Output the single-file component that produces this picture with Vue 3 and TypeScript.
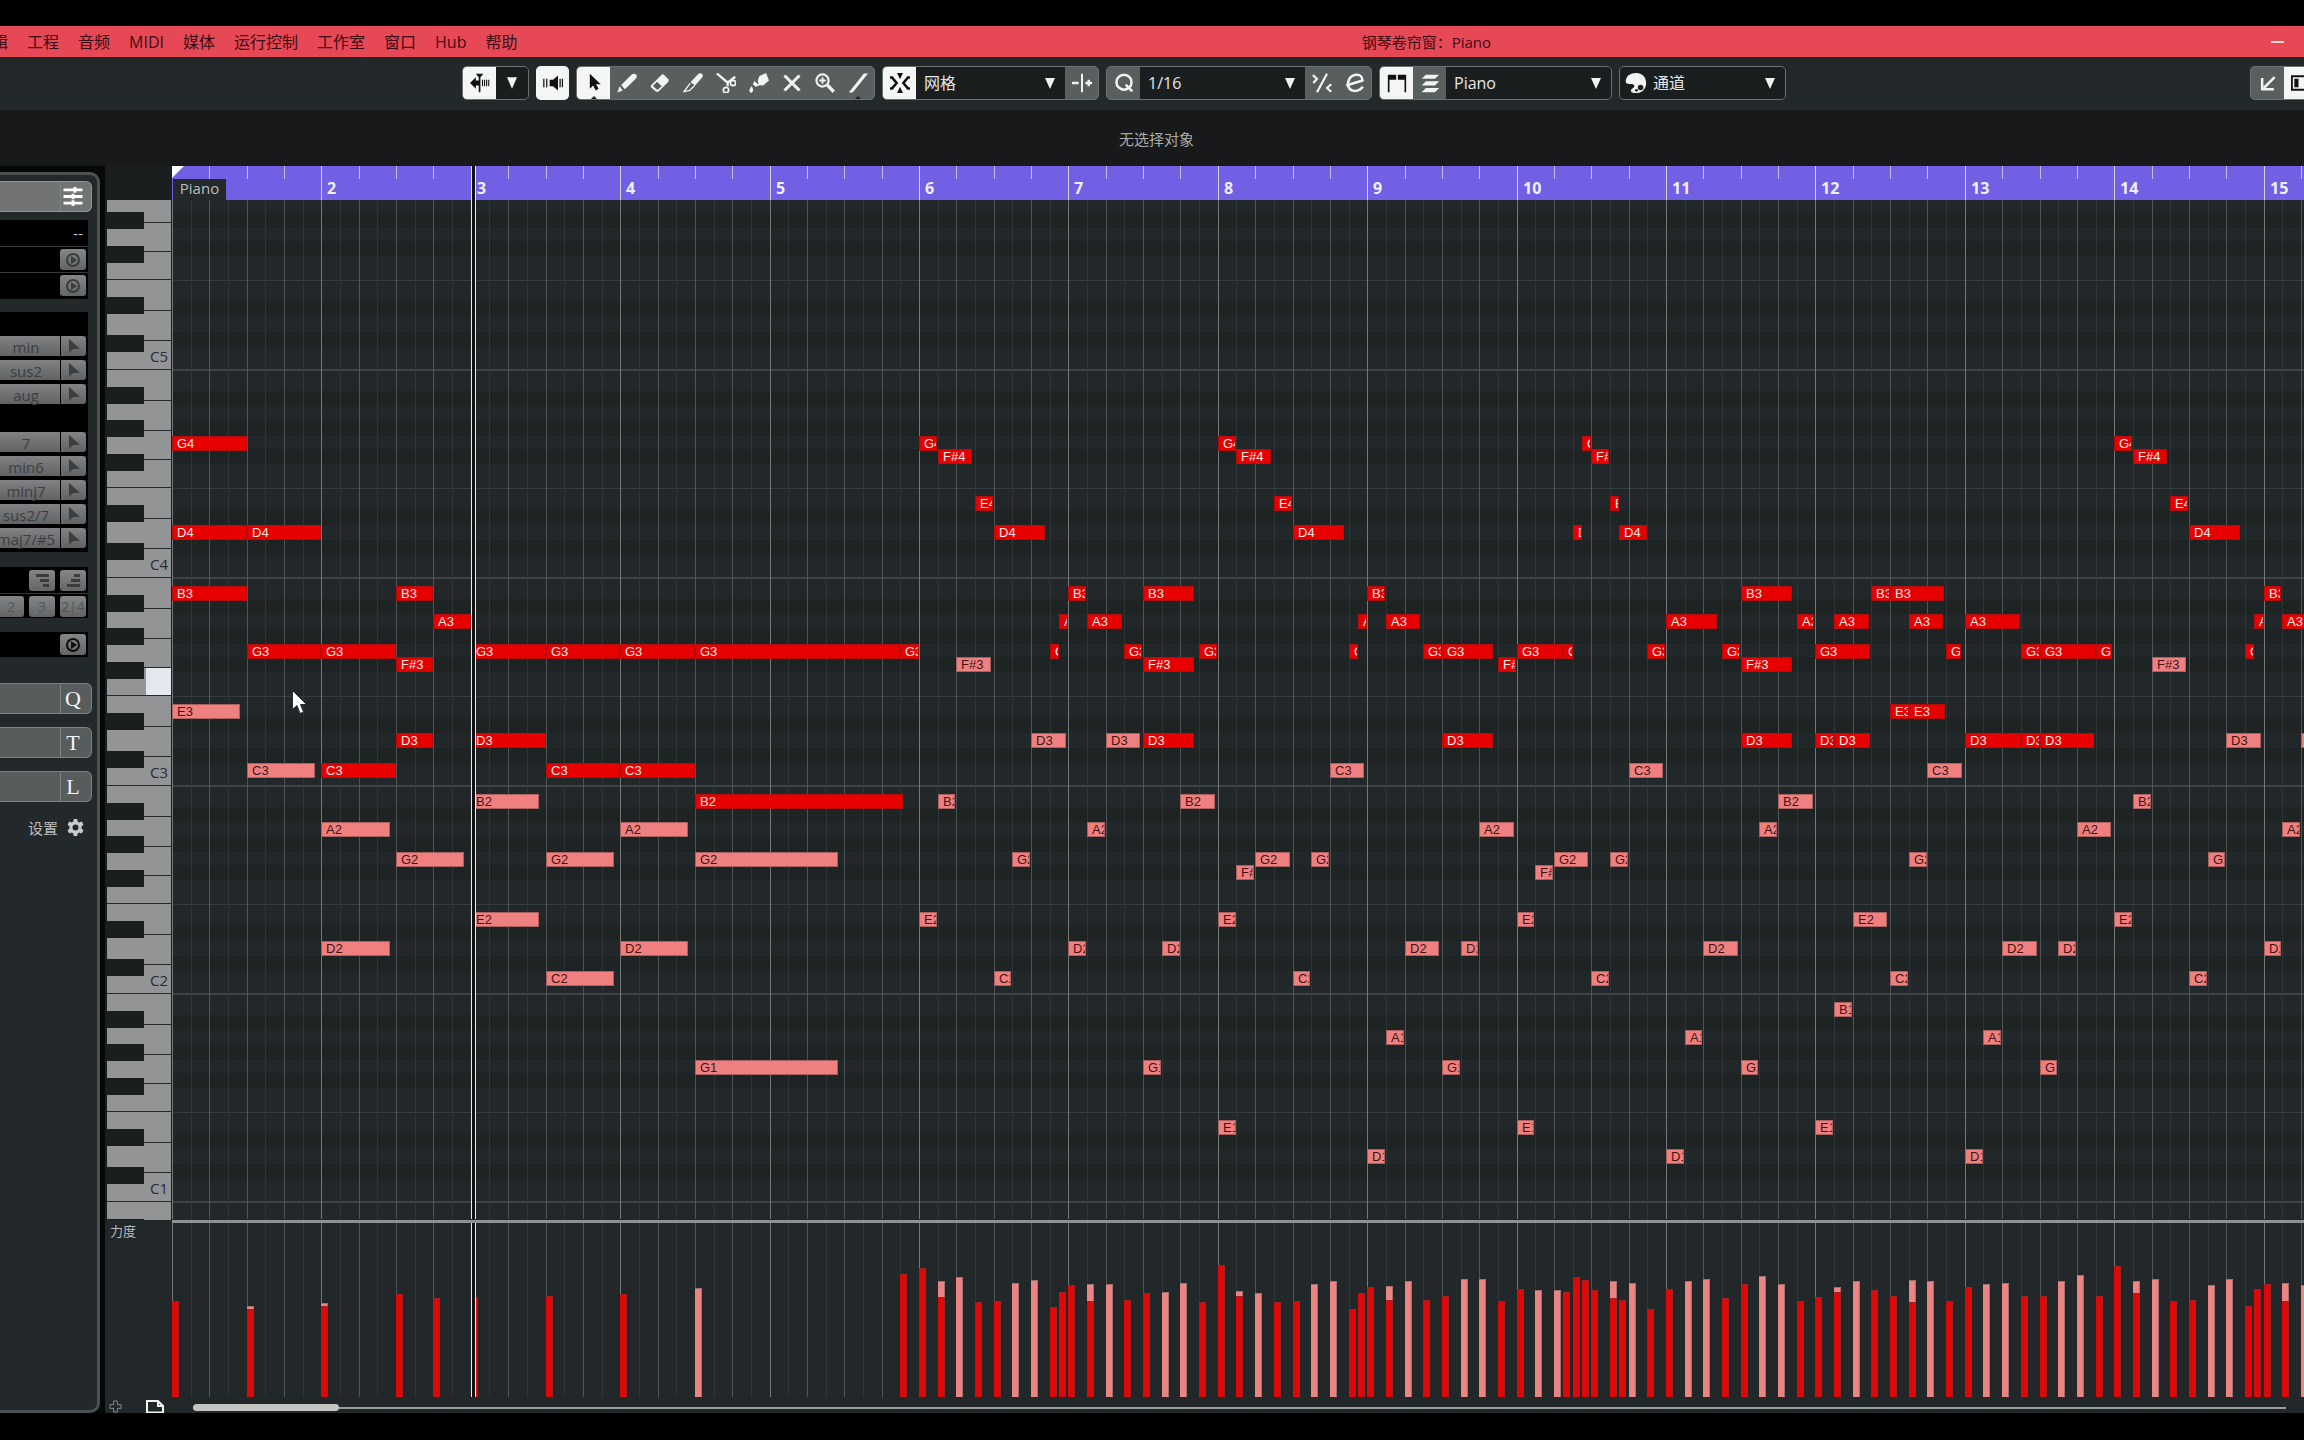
<script setup lang="ts">
import { ref } from 'vue'

type Velocity = { u: number; soft: number; hard: number }
type Note = { name: string; u: number; len: number; soft: boolean }

const UNIT = 18.675 // an eighth of a bar
const OCTAVE = 208
const WHITE = OCTAVE / 7
const KEYS_TOP = 200
const C5_LINE = 370

const px = (u: number) => Math.round(u * UNIT)

const menus = ['编辑', '工程', '音频', 'MIDI', '媒体', '运行控制', '工作室', '窗口', 'Hub', '帮助']
const chordsA = ['min', 'sus2', 'aug']
const chordsB = ['7', 'min6', 'minj7', 'sus2/7', 'maj7/#5']
const sections = ['Q', 'T', 'L']

const snap = ref('网格')
const quantize = ref('1/16')
const part = ref('Piano')
const colour = ref('通道')

const bars = Array.from({ length: 18 }, (_, i) => i)
const lines = Array.from({ length: 144 }, (_, i) => ({
  x: px(i),
  kind: i % 8 === 0 ? 'bar' : i % 2 === 0 ? 'beat' : 'sub',
}))
const ticks = lines.filter((l) => l.kind === 'beat')

const octaves = [5, 4, 3, 2, 1, 0]
const whites = ['b', 'a', 'g', 'f', 'e', 'd', 'c']
const blacks = ['as', 'gs', 'fs', 'ds', 'cs']

// distance of each note's centre from the bottom of its octave, in white keys
const steps: Record<string, number> = {
  C: 0.5, 'C#': 1, D: 1.5, 'D#': 2, E: 2.46, F: 3.5, 'F#': 4.04, G: 4.5, 'G#': 5, A: 5.5, 'A#': 6, B: 6.46,
}
function noteTop(name: string): number {
  const oct = Number(name.slice(-1))
  const base = C5_LINE - KEYS_TOP + (5 - oct) * OCTAVE
  return Math.round(base - steps[name.slice(0, -1)] * WHITE - 8.5)
}
const darkRows = octaves.flatMap((o) => ['C#', 'D#', 'F#', 'G#', 'A#'].map((n) => noteTop(n + o)))
const octaveLines = octaves.map((o) => C5_LINE - KEYS_TOP + (5 - o) * OCTAVE - 1)
const fLines = octaves.map((o) => C5_LINE - KEYS_TOP + (5 - o) * OCTAVE - 90)

// start (eighths of a bar) : length
const hardNotes: Record<string, string> = {
  G4: '0:4 40:.95 56:.95 75.5:.5 104:.95',
  'F#4': '41:1.85 57:1.85 76:.95 105:1.85',
  E4: '43:.95 59:.95 77:.5 107:.95',
  D4: '0:4 4:4 44:2.75 60:2.75 75:.5 77.5:1.5 108:2.75',
  B3: '0:4 12:2 48:.95 52:2.75 64:.95 84:2.75 91:1 92:2.9 112:.95',
  A3: '14:2 47.5:.5 49:1.85 63.5:.5 65:1.85 80:2.75 87:.95 89:1.85 93:1.85 96:2.95 111.5:.5 113:1.85',
  G3: '4:4 8:4 16:4 20:4 24:4 28:11 39:1 47:.5 51:.95 55:.95 63:.5 67:1 68:2.75 72:2.5 74.5:.5 79:.95 83:.95 88:2.9 95:.8 99:1 100:3 103:.9 111:.5',
  'F#3': '12:2 52:2.75 71:.95 84:2.75',
  E3: '92:1 93:1.95',
  D3: '12:2 16:4 52:2.75 68:2.75 84:2.75 88:1 89:1.95 96:3 99:1 100:2.9',
  C3: '8:4 20:4 24:4',
  B2: '28:11.15',
}
const softNotes: Record<string, string> = {
  'F#3': '42:1.85 106:1.85',
  E3: '0:3.65',
  D3: '46:1.85 50:1.85 110:1.85 114:1.85',
  C3: '4:3.65 62:1.85 78:1.85 94:1.85',
  B2: '16:3.65 41:.95 54:1.85 86:1.85 105:.95',
  A2: '8:3.65 24:3.65 49:.95 70:1.85 85:.95 102:1.85 113:.95',
  G2: '12:3.65 20:3.65 28:7.65 45:.95 58:1.85 61:.95 74:1.85 77:.95 93:.95 109:.95',
  'F#2': '57:.95 73:.95',
  E2: '16:3.65 40:.95 56:.95 72:.95 90:1.85 104:.95',
  D2: '8:3.65 24:3.65 48:.95 53:.95 66:1.85 69:.95 82:1.85 98:1.85 101:.95 112:.95',
  C2: '20:3.65 44:.95 60:.95 76:.95 92:.95 108:.95',
  B1: '89:.95',
  A1: '65:.95 81:.95 97:.95',
  G1: '28:7.65 52:.95 68:.95 84:.95 100:.95',
  E1: '56:.95 72:.95 88:.95',
  D1: '64:.95 80:.95 96:.95',
}
function parse(table: Record<string, string>, soft: boolean): Note[] {
  return Object.entries(table).flatMap(([name, list]) =>
    list.split(' ').map((s) => {
      const [u, len] = s.split(':').map(Number)
      return { name, u, len, soft }
    }),
  )
}
const notes = [...parse(softNotes, true), ...parse(hardNotes, false)]
const noteStyle = (n: Note) => ({
  left: px(n.u) + 'px',
  top: noteTop(n.name) + 'px',
  width: px(n.u + n.len) - px(n.u) + 'px',
})

// start / soft height / hard height (0 = absent)
const velocityText =
  '0/0/96 4/91/88 8/94/91 12/0/103 14/0/99 16/0/100 20/0/101 24/0/103 28/109/0 39/0/123 40/0/129 41/116/100 42/120/0 ' +
  '43/0/95 44/0/96 45/114/0 46/117/0 47/0/90 47.5/0/105 48/0/112 49/113/96 50/113/0 51/0/97 52/0/104 53/105/0 54/114/0 ' +
  '55/0/95 56/0/132 57/106/101 58/104/0 59/0/95 60/0/96 61/113/0 62/116/0 63/0/88 63.5/0/104 64/0/110 65/111/97 66/116/0 ' +
  '67/0/97 68/0/101 69/118/0 70/118/0 71/0/96 72/0/108 73/107/0 74/107/0 74.5/0/105 75/0/120 75.5/0/117 76/0/107 ' +
  '77/116/99 77.5/0/97 78/114/0 79/0/88 80/0/108 81/116/0 82/118/0 83/0/99 84/0/113 85/121/0 86/113/0 87/0/96 88/0/100 ' +
  '89/110/105 90/116/0 91/0/107 92/0/101 93/117/95 94/116/0 95/0/96 96/0/110 97/113/0 98/114/0 99/0/101 100/0/101 ' +
  '101/116/0 102/122/0 103/0/101 104/0/131 105/116/104 106/118/0 107/0/96 108/0/97 109/112/0 110/118/0 111/0/91 ' +
  '111.5/0/108 112/0/113 113/114/96 114/112/0'
const velocities: Velocity[] = velocityText.split(' ').map((s) => {
  const [u, soft, hard] = s.split('/').map(Number)
  return { u, soft, hard }
})
</script>

<template>
  <div class="screen">
    <header class="menubar">
      <nav class="menus" aria-label="主菜单">
        <button v-for="m in menus" :key="m" type="button" class="menu">{{ m }}</button>
      </nav>
      <h1 class="title">钢琴卷帘窗：Piano</h1>
      <button type="button" class="minimize" aria-label="最小化"></button>
    </header>

    <div class="toolbar">
      <div class="group">
        <button type="button" class="tool on" aria-label="自动滚动">
          <svg viewBox="0 0 24 24"><path d="M0 12 7 5v4h4v6H7v4z M7 1h9l-3.500 4v18h-2V5z" /><path d="M15 8v8M17.500 8v8M20 8v8M22.500 8v8" class="line" stroke-width="1.300" /></svg>
        </button>
        <button type="button" class="tool well" aria-label="滚动选项"><svg viewBox="0 0 24 24"><path d="M6 5h12l-6 14z" /></svg></button>
      </div>
      <div class="group solo">
        <button type="button" class="tool on" aria-label="声音反馈">
          <svg viewBox="0 0 24 24"><path d="M8 8h4l6-5v18l-6-5H8z" /><path d="M1 7v10M4.500 7v10M20.500 7v10M23.300 7v10" class="line" stroke-width="1.500" /></svg>
        </button>
      </div>
      <div class="group tools">
        <button type="button" class="tool on notch" aria-label="选择"><svg viewBox="0 0 24 24"><path d="M7 1v18l4-4 3 6 3.500-2-3-5.500H20z" /></svg></button>
        <button type="button" class="tool" aria-label="绘制"><svg viewBox="0 0 24 24"><path d="M.5 23.500 3 16 7 21zM5 14.500 18 1.500q3-1.500 5 0.500t-.5 5L9.500 19.500z" /></svg></button>
        <button type="button" class="tool" aria-label="擦除"><svg viewBox="0 0 24 24"><path d="M1 15 14 2q1.500-1 3 .5l5 5q1 1.500 0 3L10 22.500H7.500L1 17z" /><path d="m3.500 15.500 5-5 5.500 5.500-5 4.500z" class="cut" /></svg></button>
        <button type="button" class="tool" aria-label="修剪"><svg viewBox="0 0 24 24"><path d="M9 11 18 1.500q2-2 4.500-.5t.5 4.500L14.500 15z" /><path d="M8.500 12.500 1 22.500l7-1.500 6-6" class="line" stroke-width="1.600" /></svg></button>
        <button type="button" class="tool" aria-label="分割"><svg viewBox="0 0 24 24"><path d="M1 0.500 14 11.500v4.500M23 4.500l-9 7" class="line" stroke-width="2.800" /><circle cx="20.500" cy="12" r="3.200" class="line" stroke-width="2" /><circle cx="12" cy="20.500" r="3.200" class="line" stroke-width="2" /></svg></button>
        <button type="button" class="tool" aria-label="胶合"><svg viewBox="0 0 24 24"><path d="M10.500 9 12.500 3.500 20.500 0 24 9l-7 6-5.500-.5zM6.500 9.500l6 5.500-4.500 1.500-3.500-3zM3 15.500q3.500 4.500 0.500 8Q0 24 .5 20z" /></svg></button>
        <button type="button" class="tool" aria-label="静音"><svg viewBox="0 0 24 24"><path d="m3 3 18 18M21 3 3 21" class="line" stroke-width="3.600" /></svg></button>
        <button type="button" class="tool" aria-label="缩放"><svg viewBox="0 0 24 24"><circle cx="9" cy="9" r="7.300" class="line" stroke-width="2.600" /><path d="M5 9h8M9 5v8" class="line" stroke-width="2.200" /><path d="m15 14.500 7.500 8" class="line" stroke-width="4" /></svg></button>
        <button type="button" class="tool notch" aria-label="直线"><svg viewBox="0 0 24 24"><path d="M1 23.500 19 .5h5L5.500 23.500z" /></svg></button>
      </div>
      <div class="group">
        <button type="button" class="tool on" aria-label="吸附"><svg viewBox="0 0 24 24"><path d="M8.500 0h7L12 7.500zM8.500 24h7L12 16.500z" /><path d="M0 5.500h2.500L8 12l-5.500 6.500H0M24 5.500h-2.500L16 12l5.500 6.500H24" class="line" stroke-width="3" /></svg></button>
        <div class="field snap">
          <select v-model="snap" aria-label="吸附类型"><option>网格</option></select>
          <svg class="caret" viewBox="0 0 10 11"><path d="M0 0h10L5 11z" /></svg>
        </div>
        <button type="button" class="tool" aria-label="相对网格"><svg viewBox="0 0 24 24"><path d="M0 12h8M16 12h8M20 8v8" class="line" stroke-width="2.800" /><path d="M12 1v22" class="line" stroke-width="2.400" /></svg></button>
      </div>
      <div class="group">
        <button type="button" class="tool" aria-label="应用量化"><svg viewBox="0 0 24 24"><circle cx="12" cy="11" r="9" class="line" stroke-width="3" /><path d="m14 14 8 8" class="line" stroke-width="3" /></svg></button>
        <div class="field quant">
          <select v-model="quantize" aria-label="量化预设"><option>1/16</option></select>
          <svg class="caret" viewBox="0 0 10 11"><path d="M0 0h10L5 11z" /></svg>
        </div>
        <button type="button" class="tool" aria-label="柔性量化"><svg viewBox="0 0 24 24"><path d="M18 1 6 23M1 2.500 6 7l-4.500 5M23 13.500 18 18l5 4.500" class="line" stroke-width="2.600" /></svg></button>
        <button type="button" class="tool" aria-label="量化面板"><svg viewBox="0 0 24 24"><path d="M1.500 15 21 9Q20.500 1.500 13 2 5 3 3.500 12q0 9.500 8.500 9.500 5.500 0 9.500-5" class="line" stroke-width="3" /></svg></button>
      </div>
      <div class="group">
        <button type="button" class="tool on" aria-label="显示片段边界"><svg viewBox="0 0 24 24"><path d="M1 2h10v6H3v15H1zM23 2H13v6h8v15h2z" /></svg></button>
        <button type="button" class="tool" aria-label="仅编辑活动片段"><svg viewBox="0 0 24 24"><path d="M7 2h16l-5 5H2zM7 10h16l-5 5H2zM7 18h16l-5 5H2z" /></svg></button>
        <div class="field part">
          <select v-model="part" aria-label="活动片段"><option>Piano</option></select>
          <svg class="caret" viewBox="0 0 10 11"><path d="M0 0h10L5 11z" /></svg>
        </div>
      </div>
      <div class="group">
        <div class="field colour">
          <svg class="palette" viewBox="0 0 24 24"><path d="M12 1C20 1 23.500 7 23 13c-.5 6-5 10-11 10-5 0-6.500-2-5-4 2-2 4-2 3-4.500-.8-1.700-2.500-1.500-4.500-1.500C2 13 .5 12 .8 9.500 1.500 4 6 1 12 1z" /><circle cx="17" cy="17" r="3" class="hole" /><circle cx="12.500" cy="20" r="1.500" class="hole" /></svg>
          <select v-model="colour" aria-label="事件颜色"><option>通道</option></select>
          <svg class="caret" viewBox="0 0 10 11"><path d="M0 0h10L5 11z" /></svg>
        </div>
      </div>
      <div class="group end">
        <button type="button" class="tool" aria-label="在下部区域打开"><svg viewBox="0 0 24 24"><path d="M20 5 7 18" class="line" stroke-width="3" /><path d="M5 6v13.500h14" class="line" stroke-width="3" /></svg></button>
        <button type="button" class="tool on cutoff" aria-label="窗口布局"><svg viewBox="0 0 24 24"><path d="M0 4h24M0 20h24M1 3v18" class="line" stroke-width="2.400" /><path d="M4 7h5v10H4z" /></svg></button>
      </div>
    </div>

    <p class="info">无选择对象</p>

    <main class="workspace">
      <aside class="inspector">
        <div class="panel">
          <button type="button" class="bar-head head" aria-label="检查器设置">
            <span class="bar-icon"><svg viewBox="0 0 20 20"><path d="M0 3h20M0 10h20M0 17h20M12 0v6M10 7v6M10 14v6" stroke="#fff" stroke-width="3" /></svg></span>
          </button>
          <div class="block info-block">
            <div class="row value">--</div>
            <div class="row"><button type="button" class="chip" aria-label="应用 1"><svg viewBox="0 0 16 16"><circle cx="8" cy="8" r="6" /><path d="m6 4 6 4-6 4z" /></svg></button></div>
            <div class="row"><button type="button" class="chip" aria-label="应用 2"><svg viewBox="0 0 16 16"><circle cx="8" cy="8" r="6" /><path d="m6 4 6 4-6 4z" /></svg></button></div>
          </div>
          <div class="block chords">
            <div v-for="c in chordsA" :key="c" class="chord">
              <button type="button" class="chord-name">{{ c }}</button>
              <button type="button" class="chord-go" :aria-label="'选择 ' + c"><svg viewBox="0 0 12 14"><path d="M1 0v14l4-4h7z" /></svg></button>
            </div>
            <div class="chord-gap"></div>
            <div v-for="c in chordsB" :key="c" class="chord">
              <button type="button" class="chord-name">{{ c }}</button>
              <button type="button" class="chord-go" :aria-label="'选择 ' + c"><svg viewBox="0 0 12 14"><path d="M1 0v14l4-4h7z" /></svg></button>
            </div>
          </div>
          <div class="block voicing">
            <div class="row">
              <button type="button" class="chip" aria-label="转位向下"><svg viewBox="0 0 16 16"><path d="M2 3.500h13M6 8.500h9M9 13.500h6" class="bars" /></svg></button>
              <button type="button" class="chip" aria-label="转位向上"><svg viewBox="0 0 16 16"><path d="M9 3.500h6M6 8.500h9M2 13.500h13" class="bars" /></svg></button>
            </div>
            <div class="row">
              <button type="button" class="chip dim">2</button>
              <button type="button" class="chip dim">3</button>
              <button type="button" class="chip dim">2|4</button>
            </div>
          </div>
          <div class="block single">
            <button type="button" class="chip" aria-label="应用"><svg viewBox="0 0 16 16" class="strong"><circle cx="8" cy="8" r="6" /><path d="m6 4 6 4-6 4z" /></svg></button>
          </div>
          <button v-for="s in sections" :key="s" type="button" class="bar-head section"><span class="bar-icon">{{ s }}</span></button>
          <button type="button" class="settings">
            设置
            <svg viewBox="0 0 20 20"><path fill-rule="evenodd" d="M8 0h4l.6 3 1.700 1 3-1 2 3.500L17 9v2l2.300 2.500-2 3.500-3-1-1.700 1-.6 3H8l-.6-3-1.700-1-3 1-2-3.500L3 11V9L.7 6.500l2-3.500 3 1 1.700-1zM10 6.500a3.500 3.500 0 1 0 0 7 3.500 3.500 0 0 0 0-7z" /></svg>
          </button>
        </div>
      </aside>

      <section class="editor">
        <div class="corner"></div>
        <div class="ruler">
          <i v-for="t in ticks" :key="t.x" class="tick" :style="{ left: t.x + 'px' }"></i>
          <span v-for="b in bars.slice(1)" :key="b" class="measure" :style="{ left: px(b * 8) + 'px' }">{{ b + 1 }}</span>
          <svg class="locator" viewBox="0 0 12 12"><path d="M0 0h12L0 12z" /></svg>
          <span class="part-name">Piano</span>
          <i class="playhead"></i>
        </div>

        <div class="keyboard">
          <div v-for="o in octaves" :key="o" class="octave">
            <div v-for="w in whites" :key="w" class="white" :class="[w, { lit: o === 3 && w === 'f' }]">
              <span v-if="w === 'c' && o > 0">C{{ o }}</span>
            </div>
            <i v-for="k in blacks" :key="k" class="black" :class="k"></i>
          </div>
        </div>
        <div id="roll" class="roll">
          <i v-for="y in darkRows" :key="'d' + y" class="dark-row" :style="{ top: y + 'px' }"></i>
          <i v-for="y in fLines" :key="'f' + y" class="f-line" :style="{ top: y + 'px' }"></i>
          <i v-for="y in octaveLines" :key="'o' + y" class="o-line" :style="{ top: y + 'px' }"></i>
          <i v-for="l in lines" :key="l.x" class="vline" :class="l.kind" :style="{ left: l.x + 'px' }"></i>
          <div v-for="n in notes" :key="n.name + n.u + n.soft" class="note" :class="{ soft: n.soft }" :style="noteStyle(n)">{{ n.name }}</div>
          <i class="playhead"></i>
          <svg class="pointer" viewBox="0 0 15 24"><path d="M.5.5v19l4.500-4 3 8 3.500-1.500-3-7.500h6z" /></svg>
        </div>

        <div class="lane-name">力度</div>
        <div class="lane">
          <i v-for="l in lines" :key="l.x" class="vline" :class="l.kind" :style="{ left: l.x + 'px' }"></i>
          <template v-for="v in velocities" :key="v.u">
            <i v-if="v.soft" class="vel soft" :style="{ left: px(v.u) + 'px', height: v.soft + 'px' }"></i>
            <i v-if="v.hard" class="vel" :style="{ left: px(v.u) + 'px', height: v.hard + 'px' }"></i>
          </template>
          <i class="playhead"></i>
        </div>

        <div class="lane-tools">
          <button type="button" aria-label="添加控制器轨道"><svg viewBox="0 0 14 14"><path d="M5 1h4v4h4v4H9v4H5V9H1V5h4z" fill="none" stroke="#8b9092" /></svg></button>
          <button type="button" aria-label="预设"><svg viewBox="0 0 18 13"><path d="M1 12.500V1h11l5 5v6.500zM12 1v5h5" fill="none" stroke="#f2f4f4" stroke-width="2" /></svg></button>
        </div>
        <div class="scroll" role="scrollbar" aria-orientation="horizontal" aria-valuenow="0" aria-controls="roll"><i class="thumb"></i></div>
      </section>
    </main>
  </div>
</template>

<style>
body {
  margin: 0;
  background: #000;
}
</style>

<style scoped>
.screen {
  box-sizing: border-box;
  min-height: 100vh;
  padding: 26px 0 27px;
  background: #000;
  color: #f0f2f2;
  font-family: "Open Sans", "Noto Sans CJK SC", sans-serif;
  font-size: 16px;
  overflow: hidden;
}
* {
  box-sizing: border-box;
}
button,
select {
  margin: 0;
  padding: 0;
  border: 0;
  background: none;
  color: inherit;
  font: inherit;
}
svg {
  display: block;
}

/* menu bar */
.menubar {
  display: flex;
  align-items: center;
  position: relative;
  height: 31px;
  background: #e64856;
  color: #3c0d14;
}
.menus {
  display: flex;
  gap: 19px;
  margin-left: -24px;
  flex: 1;
}
.menu {
  line-height: 24px;
  white-space: nowrap;
}
.title {
  margin: 0;
  font-size: 15px;
  font-weight: 400;
  line-height: 24px;
}
.minimize {
  flex: 0 0 813px;
  height: 30px;
  position: relative;
}
.minimize::after {
  content: "";
  position: absolute;
  right: 20px;
  top: 14px;
  width: 13px;
  height: 2px;
  background: #ffd5d8;
}

/* toolbar */
.toolbar {
  display: flex;
  align-items: flex-start;
  gap: 7px;
  height: 53px;
  padding: 9px 0 0 462px;
  background: #23292b;
}
.group {
  display: flex;
  flex: none;
  height: 34px;
  border: 1px solid #6b7071;
  border-radius: 5px;
  background: #595e5f;
  overflow: hidden;
}
.group.solo {
  border: 0;
}
.group.end {
  margin-left: auto;
  border-right: 0;
  border-radius: 5px 0 0 5px;
}
.tool {
  position: relative;
  display: flex;
  align-items: center;
  justify-content: center;
  width: 33px;
  height: 32px;
  fill: #f2f4f4;
  stroke: none;
  color: #f2f4f4;
}
.tool svg {
  width: 20px;
  height: 20px;
}
.tool.on {
  background: #f4f5f5;
  fill: #111;
  color: #111;
}
.solo .tool {
  height: 34px;
}
.tool.well {
  width: 32px;
  background: #1a1e1f;
}
.tool.cutoff {
  width: 20px;
  overflow: hidden;
}
.tool.cutoff svg {
  flex: none;
  margin-left: 14px;
}
.tool.notch::after {
  content: "";
  position: absolute;
  bottom: -1px;
  left: 13px;
  border: 4px solid transparent;
  border-top: 0;
  border-bottom-color: #1c2021;
}
.line {
  fill: none;
  stroke: currentColor;
}
.cut {
  fill: #595e5f;
}
.field {
  position: relative;
  display: flex;
  align-items: center;
  background: #1a1e1f;
}
.field select {
  flex: 1;
  height: 32px;
  padding-left: 8px;
  appearance: none;
  outline: 0;
  color: #e6e8e8;
}
.caret {
  position: absolute;
  right: 10px;
  top: 11px;
  width: 10px;
  height: 11px;
  fill: #f2f4f4;
  pointer-events: none;
}
.snap {
  width: 149px;
}
.quant {
  width: 165px;
}
.part {
  width: 165px;
}
.colour {
  width: 165px;
}
.palette {
  width: 22px;
  height: 22px;
  margin-left: 5px;
  fill: #f2f4f4;
}
.palette + select {
  padding-left: 6px;
}
.hole {
  fill: #1a1e1f;
}

.info {
  height: 56px;
  margin: 0;
  padding-left: 9px;
  background: #17191a;
  color: #a9abab;
  font-size: 15px;
  line-height: 58px;
  text-align: center;
}

/* inspector */
.workspace {
  display: flex;
}
.inspector {
  flex: 0 0 105px;
  padding-top: 6px;
  background: #060808;
}
.panel {
  width: 100px;
  height: 100%;
  padding-top: 6px;
  border: 3px solid #4b5153;
  border-left: 0;
  border-radius: 0 10px 10px 0;
  background: #23292b;
  overflow: hidden;
}
.bar-head {
  display: flex;
  justify-content: flex-end;
  width: 92px;
  height: 31px;
  border: 1px solid #7d8283;
  border-left: 0;
  border-radius: 0 6px 6px 0;
  background: #575c5d;
}
.bar-head.head {
  margin-bottom: 8px;
  border-color: #929495;
  background: #717374;
}
.bar-icon {
  display: flex;
  align-items: center;
  justify-content: center;
  width: 31px;
  height: 29px;
  padding-right: 6px;
  border-left: 1px solid #7d8283;
  color: #f4f5f5;
  font: 22px "Liberation Serif", serif;
}
.bar-icon svg {
  width: 20px;
  height: 19px;
}
.section {
  margin-bottom: 13px;
}
.block {
  width: 88px;
  background: #000;
}
.row {
  display: flex;
  align-items: center;
  justify-content: flex-end;
  gap: 5px;
  height: 26px;
  padding-right: 2px;
}
.row + .row {
  border-top: 1px solid #33393b;
}
.info-block {
  height: 79px;
  margin-bottom: 13px;
}
.value {
  padding-right: 5px;
  color: #c8caca;
  font-size: 15px;
}
.chip {
  display: flex;
  flex: none;
  align-items: center;
  justify-content: center;
  width: 26px;
  height: 21px;
  border-radius: 3px;
  background: linear-gradient(#848688, #626466);
}
.chip svg {
  width: 16px;
  height: 16px;
  fill: #3a3d3e;
}
.chip circle {
  fill: none;
  stroke: #3a3d3e;
  stroke-width: 2;
}
.chip .strong {
  fill: #0c0e0e;
}
.chip .strong circle {
  stroke: #0c0e0e;
}
.chip .bars {
  stroke: #3a3d3e;
  stroke-width: 3;
}
.chip.dim {
  color: #4e585e;
  font-size: 14px;
}
.chords {
  height: 240px;
  margin-bottom: 15px;
  padding-top: 24px;
}
.chord {
  display: flex;
  gap: 1px;
  height: 20px;
  margin: 0 0 4px -8px;
}
.chord-gap {
  height: 24px;
}
.chord-name {
  width: 68px;
  background: linear-gradient(#808284, #606264);
  color: #3b3e40;
  font-size: 15px;
  line-height: 22px;
  white-space: nowrap;
}
.chord-go {
  display: flex;
  align-items: center;
  justify-content: center;
  width: 25px;
  border-radius: 0 3px 3px 0;
  background: linear-gradient(#808284, #606264);
  fill: #3b3e40;
}
.chord-go svg {
  width: 12px;
  height: 14px;
}
.voicing {
  height: 51px;
  margin-bottom: 14px;
  overflow: hidden;
}
.single {
  display: flex;
  align-items: center;
  justify-content: flex-end;
  height: 25px;
  margin-bottom: 26px;
  padding-right: 2px;
}
.settings {
  display: flex;
  align-items: center;
  justify-content: flex-end;
  gap: 9px;
  width: 84px;
  height: 24px;
  color: #b9bbbb;
  font-size: 15px;
}
.settings svg {
  width: 17px;
  height: 17px;
  fill: #c9cbcb;
}

/* editor */
.editor {
  flex: 1;
  min-width: 0;
  display: grid;
  grid-template-columns: 67px minmax(0, 1fr);
  grid-template-rows: 34px 1020px 177px 16px;
  background: #222729;
}
.corner {
  background: #1a1e1f;
}
.ruler {
  position: relative;
  background: #7160e3;
  overflow: hidden;
}
.tick {
  position: absolute;
  top: 0;
  width: 1px;
  height: 13px;
  background: #c3bbf3;
}
.measure {
  position: absolute;
  top: 0;
  height: 34px;
  padding: 12px 0 0 5px;
  border-left: 1px solid #d6d1f7;
  color: #f1effd;
  font-weight: 700;
  line-height: 20px;
}
.locator {
  position: absolute;
  top: 0;
  left: 0;
  width: 12px;
  height: 12px;
  fill: #fff;
}
.part-name {
  position: absolute;
  top: 13px;
  left: 1px;
  width: 53px;
  height: 21px;
  background: #23292b;
  color: #b9bbbc;
  font-size: 15px;
  line-height: 18px;
  text-align: center;
}
.playhead {
  position: absolute;
  top: 0;
  bottom: 0;
  left: 299px;
  width: 5px;
  border: solid #e9ebeb;
  border-width: 0 1px;
  background: #101213;
}

.keyboard {
  height: 1020px;
  padding-right: 1px;
  background: #1a1e1f;
  overflow: hidden;
}
.octave {
  position: relative;
  margin-left: 2px;
}
.octave:first-child {
  margin-top: -38px;
}
.white {
  height: 29px;
  border-bottom: 1px solid #26292a;
  background: #929496;
  color: #2a2e30;
  font-size: 15px;
  line-height: 30px;
  text-align: right;
  padding-right: 3px;
}
.white.b,
.white.e {
  height: 31px;
}
.white.a,
.white.d {
  height: 30px;
}
.white.f {
  height: 28px;
}
.white.lit {
  background: linear-gradient(90deg, #929496 39px, #e4e8ee 39px);
}
.black {
  position: absolute;
  left: 0;
  width: 37px;
  height: 17px;
  background: #1a1e1f;
}
.as {
  top: 17px;
}
.gs {
  top: 50px;
}
.fs {
  top: 84px;
}
.ds {
  top: 135px;
}
.cs {
  top: 173px;
}

.roll {
  position: relative;
  border-bottom: 1px solid #222729;
  overflow: hidden;
}
.dark-row {
  position: absolute;
  left: 0;
  right: 0;
  height: 15px;
  background: #1e2324;
}
.f-line,
.o-line {
  position: absolute;
  left: 0;
  right: 0;
  height: 1px;
  background: #353b3c;
}
.o-line {
  height: 2px;
  background: #3d4344;
}
.vline {
  position: absolute;
  top: 0;
  bottom: 0;
  width: 1px;
  background: #2f3536;
}
.vline.beat {
  background: #4f5556;
}
.vline.bar {
  background: #747879;
}
.note {
  position: absolute;
  height: 15px;
  padding-left: 4px;
  border: 1px solid #b30d0d;
  background: #e60000;
  color: #fbe9e2;
  font: 13px/13px "Liberation Sans", sans-serif;
  white-space: nowrap;
  overflow: hidden;
}
.note.soft {
  border-color: #a86160;
  background: #f08080;
  color: #431516;
}
.pointer {
  position: absolute;
  left: 120px;
  top: 490px;
  width: 15px;
  height: 24px;
  fill: #fff;
  stroke: #2a2d2e;
}

.lane-name {
  padding: 2px 0 0 5px;
  color: #b9bbbb;
  font-size: 13px;
  line-height: 18px;
}
.lane {
  position: relative;
  border-top: 3px solid #8e9293;
  overflow: hidden;
}
.vel {
  position: absolute;
  bottom: 0;
  width: 7px;
  border: solid #a32020;
  border-width: 1px 1px 0 0;
  background: #dd0808;
}
.vel.soft {
  border-color: #a0716f;
  background: #eb8482;
}
.lane-tools {
  display: flex;
  align-items: flex-end;
  gap: 24px;
  padding-left: 4px;
}
.lane-tools svg {
  height: 13px;
}
.scroll {
  position: relative;
  display: flex;
  align-items: center;
  margin: 5px 18px 0 21px;
  background: linear-gradient(#9a9d9e, #9a9d9e) 0 5px / 100% 2px no-repeat;
}
.thumb {
  width: 146px;
  height: 7px;
  border-radius: 4px;
  background: #c4c4c2;
}
</style>
